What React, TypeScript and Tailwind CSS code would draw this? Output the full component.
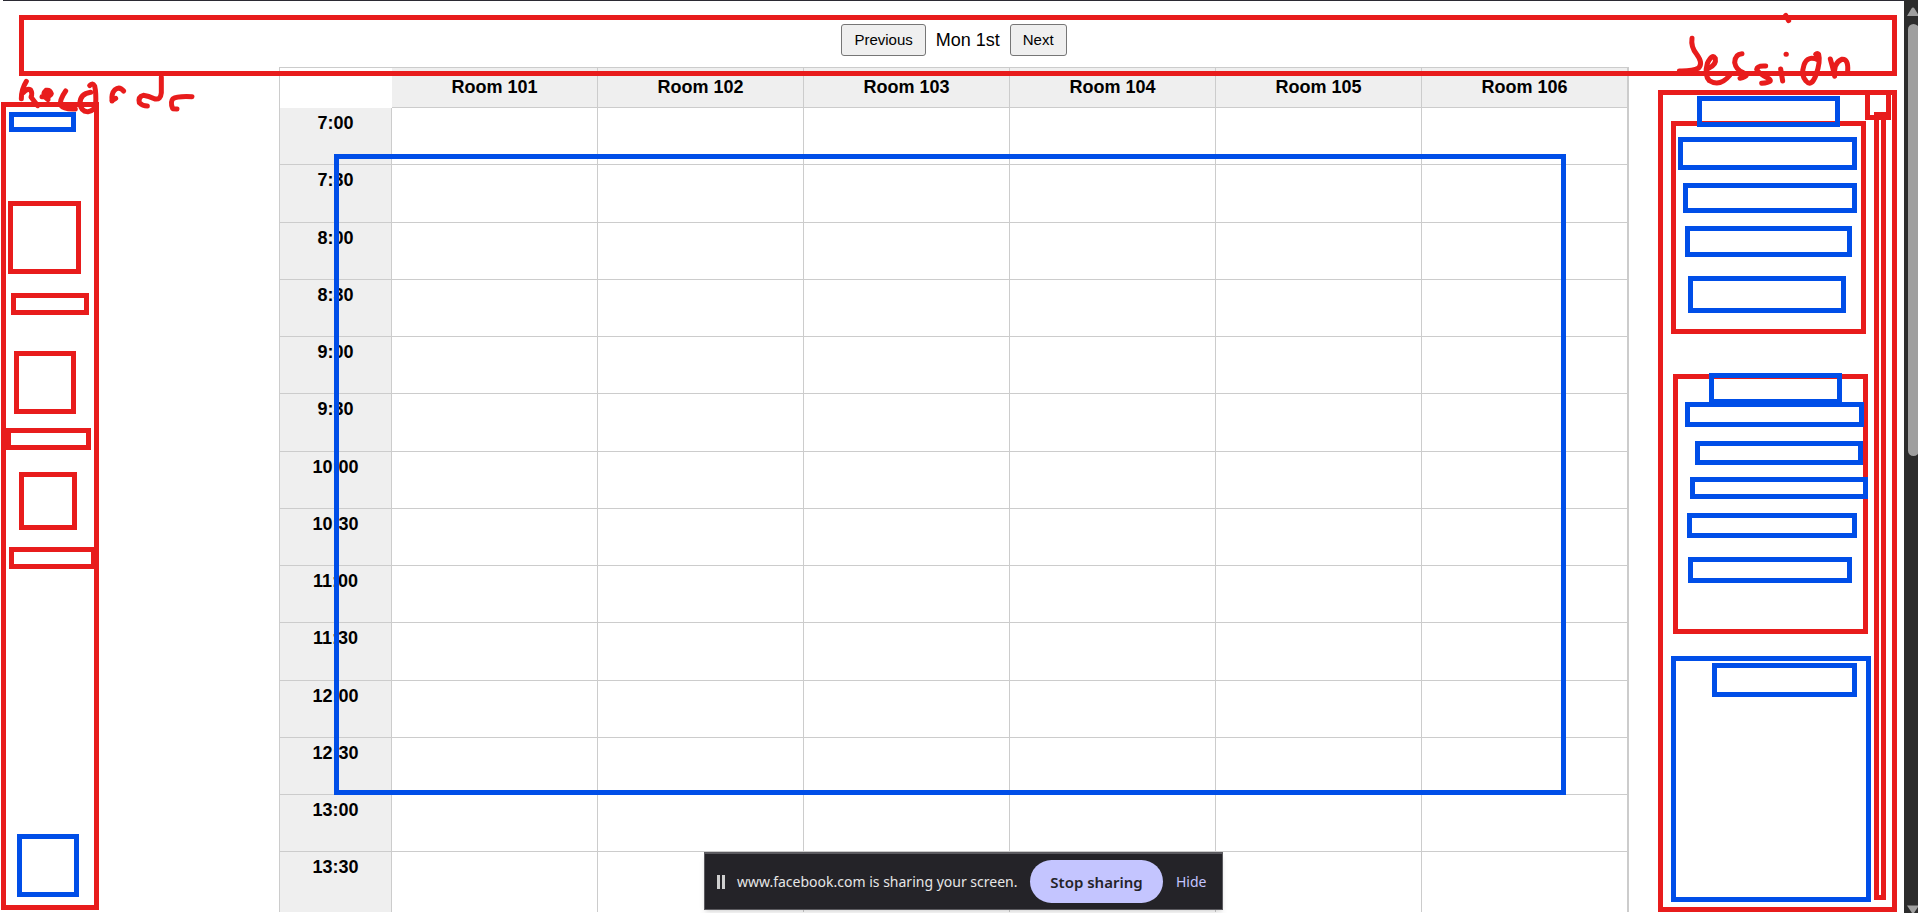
type Box = [left: number, top: number, right: number, bottom: number];

const rooms = ["Room 101", "Room 102", "Room 103", "Room 104", "Room 105", "Room 106"];

const times = [
  "7:00", "7:30", "8:00", "8:30", "9:00", "9:30", "10:00",
  "10:30", "11:00", "11:30", "12:00", "12:30", "13:00", "13:30",
];

const redBoxes: Box[] = [
  [19, 15, 1897, 76],
  [1, 102, 99, 910],
  [8, 201, 81, 274],
  [11, 293, 89, 315],
  [14, 351, 76, 414],
  [6, 428, 91, 450],
  [19, 472, 77, 530],
  [9, 547, 96, 569],
  [1658, 90, 1897, 912],
  [1865, 90, 1891, 120],
  [1874, 112, 1886, 900],
  [1671, 121, 1866, 334],
  [1673, 374, 1868, 634],
];

const blueBoxes: Box[] = [
  [9, 112, 76, 132],
  [17, 834, 79, 897],
  [334, 154, 1566, 795],
  [1697, 96, 1840, 127],
  [1678, 137, 1857, 170],
  [1683, 183, 1857, 213],
  [1685, 226, 1852, 257],
  [1688, 276, 1846, 313],
  [1709, 373, 1842, 404],
  [1685, 402, 1864, 427],
  [1695, 441, 1863, 465],
  [1690, 477, 1868, 499],
  [1687, 513, 1857, 538],
  [1688, 557, 1852, 583],
  [1671, 656, 1871, 902],
  [1712, 663, 1857, 697],
];

function Boxes({ boxes, color }: { boxes: Box[]; color: string }) {
  return (
    <g stroke={color} strokeWidth="5">
      {boxes.map(([l, t, r, b]) => (
        <rect key={`${l}-${t}`} x={l + 2.5} y={t + 2.5} width={r - l - 5} height={b - t - 5} />
      ))}
    </g>
  );
}

function Annotations() {
  return (
    <svg
      className="pointer-events-none absolute left-0 top-0"
      width="1904"
      height="913"
      viewBox="0 0 1904 913"
      fill="none"
      aria-hidden="true"
    >
      <Boxes boxes={redBoxes} color="#e81c1c" />
      <Boxes boxes={blueBoxes} color="#004ee8" />
      <g stroke="#e81c1c" strokeWidth="15" strokeLinecap="round" strokeLinejoin="round" transform="scale(0.33333)">
        <path d="M79 244Q64 268 64 296M70 278Q82 264 92 270Q98 280 93 291Q102 303 113 317" />
        <path d="M126 290Q152 292 154 281Q150 269 138 271Q128 280 134 290L144 299L144 286" />
        <path d="M197 273Q178 300 182 316Q192 329 226 327" />
        <path d="M272 277Q240 282 240 310Q243 336 264 335Q285 332 287 312Q289 280 284 258Q278 246 269 257" />
        <path d="M336 303Q334 280 344 270Q358 258 371 273M336 302L347 295" />
        <path d="M484 232L484 278Q482 300 465 297Q445 288 430 286Q414 290 418 308Q428 318 442 318" />
        <path d="M576 290Q530 288 519 296Q510 306 518 326L531 327" />
      </g>
      <g
        stroke="#e81c1c"
        strokeWidth="15"
        strokeLinecap="round"
        strokeLinejoin="round"
        transform="translate(1600 0) scale(0.33333)"
      >
        <path d="M276 115Q272 140 290 163Q310 190 296 204Q278 214 238 213" />
        <path d="M325 205Q350 195 346 175Q336 160 322 190Q312 225 328 242Q360 262 390 225" />
        <path d="M426 161Q405 162 404 188Q408 210 430 218Q452 228 420 235" />
        <path d="M497 198Q472 196 470 208Q475 220 503 234Q525 246 485 250" />
        <path d="M542 207L548 243M558 163L559 163M557 46L566 62" />
        <path d="M655 180Q622 165 612 195Q602 225 618 243Q634 262 648 225Q662 185 656 163Q652 158 647 163" />
        <path d="M691 177Q698 200 704 229Q700 188 725 178Q746 175 743 214" />
      </g>
    </svg>
  );
}

function DayNav() {
  return (
    <nav className="flex items-center justify-center gap-[10px] pt-6 pb-[11px]" aria-label="Day">
      <button type="button" className="h-8 rounded-[3px] border border-[#767676] bg-[#efefef] px-3 text-[15px] leading-5">
        Previous
      </button>
      <span className="text-[18px] leading-5">Mon 1st</span>
      <button type="button" className="h-8 rounded-[3px] border border-[#767676] bg-[#efefef] px-3 text-[15px] leading-5">
        Next
      </button>
    </nav>
  );
}

function Schedule() {
  return (
    <table className="w-full table-fixed border-separate border-spacing-0 border-l border-r border-t border-[#cccccc] text-[18px] leading-5">
      <colgroup>
        <col className="w-28" />
        {rooms.map((room) => (
          <col key={room} />
        ))}
      </colgroup>
      <thead>
        <tr className="h-10">
          <td />
          {rooms.map((room) => (
            <th key={room} scope="col" className="border-b border-r border-[#cccccc] bg-[#efefef] p-0 pt-[9px] pb-[10px] font-bold">
              {room}
            </th>
          ))}
        </tr>
      </thead>
      <tbody>
        {times.map((time, i) => (
          <tr key={time} className={i === times.length - 1 ? "h-[60px] [&>*]:border-b-0" : i % 4 === 1 ? "h-[58px]" : "h-[57px]"}>
            <th scope="row" className="border-b border-r border-[#cccccc] bg-[#efefef] p-0 pt-[5px] align-top font-bold">
              {time}
            </th>
            {rooms.map((room) => (
              <td key={room} className="border-b border-r border-[#cccccc] p-0" />
            ))}
          </tr>
        ))}
      </tbody>
    </table>
  );
}

function SharingBar() {
  return (
    <div className="absolute bottom-[3px] left-[704px] flex h-[58px] w-[519px] items-center border border-t-2 border-[#5b5a5f] bg-[#242328] pl-3 font-['Noto_Sans',sans-serif] text-[14px] leading-5 text-[#e6e6e6] shadow-md">
      <svg width="8" height="14" viewBox="0 0 8 14" fill="#cfcfcf" aria-hidden="true">
        <path d="M0 0h3v14H0zM5 0h3v14H5z" />
      </svg>
      <span className="ml-3 w-[293px] whitespace-nowrap">www.facebook.com is sharing your screen.</span>
      <button type="button" className="h-[43px] w-[133px] rounded-full bg-[#c4c5ff] text-[15px] font-semibold text-[#242328]">
        Stop sharing
      </button>
      <button type="button" className="ml-[13px] text-[#c4c5ff]">
        Hide
      </button>
    </div>
  );
}

function Scrollbar() {
  return (
    <div className="relative w-[14px] shrink-0 overflow-hidden bg-[#2c2c2c]" aria-hidden="true">
      <svg className="absolute left-[3px] top-[7px]" width="12" height="10" viewBox="0 0 12 10" fill="#9f9f9f">
        <path d="M6 0.5Q7 0.5 7.500 1.500L12 9H0L4.500 1.500Q5 0.500 6 0.500Z" />
      </svg>
      <div className="absolute left-1 top-6 h-[432px] w-[11px] rounded-full bg-[#9f9f9f]" />
      <svg className="absolute bottom-0 left-[3px]" width="12" height="8" viewBox="0 0 12 8" fill="#9f9f9f">
        <path d="M0 0.500H12L7 8H5Z" />
      </svg>
    </div>
  );
}

export default function App() {
  return (
    <div className="flex h-screen overflow-hidden bg-white font-['Liberation_Sans',Arial,sans-serif] text-black">
      <main className="relative min-w-0 flex-1 overflow-hidden">
        <div className="pl-[279px] pr-[275px]">
          <DayNav />
          <Schedule />
        </div>
        <Annotations />
        <div className="absolute left-[3px] right-0 top-0 h-px bg-[#2b2a33]" />
        <SharingBar />
      </main>
      <Scrollbar />
    </div>
  );
}
